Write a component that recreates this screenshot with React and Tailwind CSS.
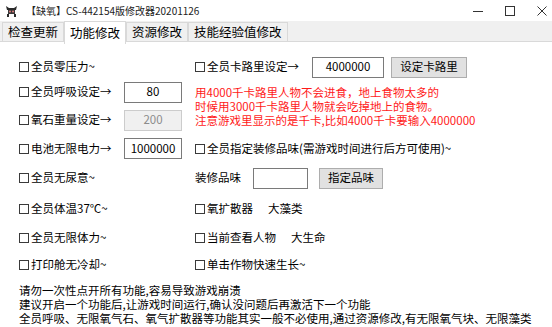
import React from 'react';

const Box = () => <span className="inline-block w-[10px] h-[10px] border border-[#3a3a3a] mr-[2px] shrink-0" />;

const Check = ({ children, className = '' }) => (
  <div className={`flex items-center ${className}`}>
    <Box />
    <span>{children}</span>
  </div>
);

const Input = ({ value, w = 'w-[58px]', disabled }) => (
  <div
    className={`${w} h-[21px] flex items-center justify-center border ${
      disabled ? 'border-[#cccccc] bg-[#f0f0f0] text-[#8c8c8c]' : 'border-[#7a7a7a] bg-white'
    }`}
  >
    {value}
  </div>
);

const Btn = ({ children, w }) => (
  <div className={`${w} h-[21px] flex items-center justify-center bg-[#e1e1e1] border border-[#adadad]`}>
    {children}
  </div>
);

const Tab = ({ label, active }) =>
  active ? (
    <div className="h-[23px] -mb-[1px] self-start px-[5px] flex items-center bg-white border border-b-0 border-[#d9d9d9] text-[12.5px]">
      {label}
    </div>
  ) : (
    <div className="h-[20px] mt-[1px] px-[5px] flex items-center border border-b-0 border-[#d9d9d9] text-[12.5px]">
      {label}
    </div>
  );

export default function App() {
  return (
    <div className="w-[552px] h-[327px] overflow-hidden bg-white text-black font-['Noto_Sans_CJK_SC',sans-serif] text-[11.5px] leading-none">
      {/* title bar */}
      <div className="h-[21px] flex items-center bg-white">
        <svg width="13" height="12" viewBox="0 0 13 12" className="ml-[5px] mr-[8px]">
          <path d="M1 1 L4 3 L9 3 L12 1 L11 5 L2 5 Z" fill="#2b2b2b" />
          <rect x="3" y="5" width="7" height="4" fill="#3a3a3a" />
          <circle cx="5" cy="6.5" r="1" fill="#e07a7a" />
          <circle cx="8" cy="6.5" r="1" fill="#e07a7a" />
          <rect x="2" y="9" width="2" height="3" fill="#2b2b2b" />
          <rect x="9" y="9" width="2" height="3" fill="#2b2b2b" />
        </svg>
        <span className="text-[10px] text-[#222]">【缺氧】CS-442154版修改器20201126</span>
        <div className="ml-auto flex items-center">
          <svg width="10" height="10" viewBox="0 0 10 10" className="mr-[22px]">
            <line x1="0" y1="5.5" x2="10" y2="5.5" stroke="#333" strokeWidth="1" />
          </svg>
          <svg width="10" height="10" viewBox="0 0 10 10" className="mr-[22px]">
            <rect x="0.5" y="0.5" width="9" height="9" fill="none" stroke="#333" strokeWidth="1" />
          </svg>
          <svg width="10" height="10" viewBox="0 0 10 10" className="mr-[5px]">
            <path d="M0.5 0.5 L9.5 9.5 M9.5 0.5 L0.5 9.5" stroke="#333" strokeWidth="1" />
          </svg>
        </div>
      </div>

      {/* tabs */}
      <div className="h-[21px] bg-[#f0f0f0] border-b border-[#d9d9d9] flex items-start pl-[2px] relative">
        <Tab label="检查更新" />
        <Tab label="功能修改" active />
        <Tab label="资源修改" />
        <Tab label="技能经验值修改" />
      </div>

      {/* content */}
      <div className="pl-[19px] pt-[13px]">
        <div className="grid grid-cols-[176px_1fr] grid-rows-[24px_26px_30px_27px_32px_29px_29px_26px]">
          <Check className="col-start-1 row-start-1">全员零压力~</Check>
          <div className="col-start-2 row-start-1 flex items-center">
            <Check className="w-[117px]">全员卡路里设定→</Check>
            <Input value="4000000" w="w-[72px]" />
            <div className="w-[7px]" />
            <Btn w="w-[76px]">设定卡路里</Btn>
          </div>

          <div className="col-start-1 row-start-2 flex items-center">
            <Check className="w-[105px]">全员呼吸设定→</Check>
            <Input value="80" />
          </div>
          <div className="col-start-2 row-start-2 row-span-2 pt-[6px] leading-[14px] text-[#ff1a1a]">
            <div>用4000千卡路里人物不会进食，地上食物太多的</div>
            <div>时候用3000千卡路里人物就会吃掉地上的食物。</div>
            <div>注意游戏里显示的是千卡,比如4000千卡要输入4000000</div>
          </div>

          <div className="col-start-1 row-start-3 flex items-center">
            <Check className="w-[105px]">氧石重量设定→</Check>
            <Input value="200" disabled />
          </div>

          <div className="col-start-1 row-start-4 flex items-center">
            <Check className="w-[105px]">电池无限电力→</Check>
            <Input value="1000000" />
          </div>
          <Check className="col-start-2 row-start-4">全员指定装修品味(需游戏时间进行后方可使用)~</Check>

          <Check className="col-start-1 row-start-5">全员无尿意~</Check>
          <div className="col-start-2 row-start-5 flex items-center">
            <span className="w-[58px]">装修品味</span>
            <Input value="" w="w-[55px]" />
            <div className="w-[11px]" />
            <Btn w="w-[64px]">指定品味</Btn>
          </div>

          <Check className="col-start-1 row-start-6">全员体温37℃~</Check>
          <div className="col-start-2 row-start-6 flex items-center">
            <Check className="w-[73px]">氧扩散器</Check>
            <span>大藻类</span>
          </div>

          <Check className="col-start-1 row-start-7">全员无限体力~</Check>
          <div className="col-start-2 row-start-7 flex items-center">
            <Check className="w-[96px]">当前查看人物</Check>
            <span>大生命</span>
          </div>

          <Check className="col-start-1 row-start-8">打印舱无冷却~</Check>
          <Check className="col-start-2 row-start-8">单击作物快速生长~</Check>
        </div>

        <div className="mt-[5px] leading-[14px]">
          <div>请勿一次性点开所有功能,容易导致游戏崩溃</div>
          <div>建议开启一个功能后,让游戏时间运行,确认没问题后再激活下一个功能</div>
          <div className="whitespace-nowrap">全员呼吸、无限氧气石、氧气扩散器等功能其实一般不必使用,通过资源修改,有无限氧气块、无限藻类</div>
        </div>
      </div>
    </div>
  );
}
